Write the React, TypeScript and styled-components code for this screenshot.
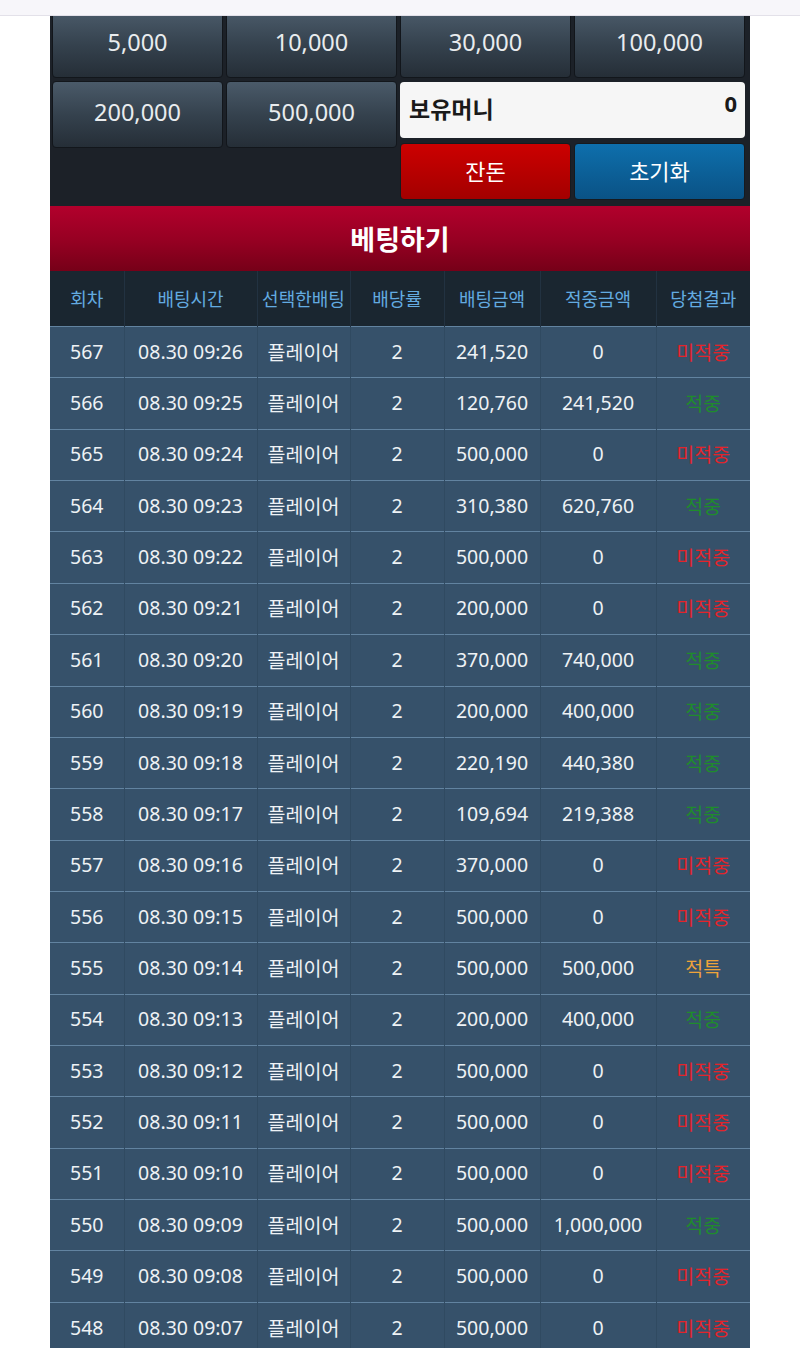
import styled, { createGlobalStyle, css } from "styled-components";

const GlobalStyle = createGlobalStyle`
  body {
    margin: 0;
    background: #ffffff;
    font-family: "Noto Sans", "Noto Sans CJK KR", sans-serif;
  }
`;

const TopBar = styled.div`
  position: fixed;
  top: 0;
  left: 0;
  right: 0;
  height: 15px;
  background: #f7f6fa;
  border-bottom: 1px solid #e3e1e9;
  z-index: 10;
`;

const Page = styled.div`
  width: 700px;
  margin: 0 auto;
  background: #1c2128;
`;

const Pad = styled.div`
  display: grid;
  grid-template-columns: repeat(4, 1fr);
  grid-template-rows: 67px auto;
  gap: 3px;
  padding: 11px 5px 6px 2px;
`;

const ChipButton = styled.button`
  height: 67px;
  border: 1px solid #12161b;
  border-radius: 4px;
  background: linear-gradient(to bottom, #4a5a69 0%, #35424e 50%, #252e37 100%);
  color: #e9ecee;
  font-family: "Noto Sans", "Noto Sans CJK KR", sans-serif;
  font-size: 23.5px;
  padding: 0 0 6px;
  align-self: start;
  cursor: pointer;
`;

const Side = styled.div`
  grid-column: 3 / span 2;
  display: flex;
  flex-direction: column;
  gap: 5px;
  padding-top: 1px;
`;

const Wallet = styled.div`
  height: 56px;
  border-radius: 4px;
  background: #f6f6f6;
  display: flex;
  align-items: center;
  justify-content: space-between;
  padding: 0 8px 4px 9px;
  box-sizing: border-box;
  color: #1a1a1a;
  font-weight: 700;
  font-size: 23px;
  font-family: "Noto Sans CJK KR", "Noto Sans", sans-serif;
`;

const WalletValue = styled.span`
  font-family: "Noto Sans", sans-serif;
  font-weight: 700;
  font-size: 22px;
  margin-bottom: 10px;
`;

const ActionRow = styled.div`
  display: grid;
  grid-template-columns: 1fr 1fr;
  gap: 3px;
`;

const ActionButton = styled.button<{ $tone: "red" | "blue" }>`
  height: 57px;
  border-radius: 4px;
  border: 1px solid #161a1f;
  color: #ffffff;
  font-size: 22px;
  font-family: "Noto Sans CJK KR", "Noto Sans", sans-serif;
  padding: 0 0 3px;
  ${({ $tone }) =>
    $tone === "red"
      ? css`
          background: linear-gradient(to bottom, #cc0000 0%, #a30000 100%);
        `
      : css`
          background: linear-gradient(to bottom, #0e6fac 0%, #0a5285 100%);
        `}
`;

const BetHeader = styled.div`
  height: 65px;
  display: flex;
  align-items: center;
  justify-content: center;
  background: linear-gradient(to bottom, #b2002c 0%, #950022 55%, #760018 100%);
  color: #ffffff;
  font-weight: 700;
  font-size: 27px;
  font-family: "Noto Sans CJK KR", "Noto Sans", sans-serif;
  box-sizing: border-box;
`;

const Table = styled.table`
  width: 700px;
  border-collapse: collapse;
  table-layout: fixed;
`;

const HeadCell = styled.th`
  height: 53px;
  padding: 0 0 2px;
  background: #1a2630;
  color: #63abe0;
  font-weight: 400;
  font-size: 18px;
  font-family: "Noto Sans CJK KR", "Noto Sans", sans-serif;
  border-left: 1px solid #223241;
  white-space: nowrap;
  &:first-child {
    border-left: none;
  }
`;

const Row = styled.tr`
  background: #36516a;
  border-top: 1px solid #6283a0;
`;

type Result = "miss" | "hit" | "special";

const resultColors: Record<Result, string> = {
  miss: "#e3242b",
  hit: "#1f8c2c",
  special: "#eea43a",
};

const Cell = styled.td<{ $result?: Result }>`
  height: 48.37px;
  padding: 0 0 2px;
  text-align: center;
  color: ${({ $result }) => ($result ? resultColors[$result] : "#eef2f5")};
  font-size: 19.5px;
  font-family: "Noto Sans", "Noto Sans CJK KR", sans-serif;
  border-left: 1px solid #304a61;
  white-space: nowrap;
  &:first-child {
    border-left: none;
  }
`;

const columns = [74, 133, 93, 94, 96, 116, 94];
const headers = ["회차", "배팅시간", "선택한배팅", "배당률", "배팅금액", "적중금액", "당첨결과"];

const rows: [number, string, string, string, Result][] = [
  [567, "09:26", "241,520", "0", "miss"],
  [566, "09:25", "120,760", "241,520", "hit"],
  [565, "09:24", "500,000", "0", "miss"],
  [564, "09:23", "310,380", "620,760", "hit"],
  [563, "09:22", "500,000", "0", "miss"],
  [562, "09:21", "200,000", "0", "miss"],
  [561, "09:20", "370,000", "740,000", "hit"],
  [560, "09:19", "200,000", "400,000", "hit"],
  [559, "09:18", "220,190", "440,380", "hit"],
  [558, "09:17", "109,694", "219,388", "hit"],
  [557, "09:16", "370,000", "0", "miss"],
  [556, "09:15", "500,000", "0", "miss"],
  [555, "09:14", "500,000", "500,000", "special"],
  [554, "09:13", "200,000", "400,000", "hit"],
  [553, "09:12", "500,000", "0", "miss"],
  [552, "09:11", "500,000", "0", "miss"],
  [551, "09:10", "500,000", "0", "miss"],
  [550, "09:09", "500,000", "1,000,000", "hit"],
  [549, "09:08", "500,000", "0", "miss"],
  [548, "09:07", "500,000", "0", "miss"],
];

const resultText: Record<Result, string> = {
  miss: "미적중",
  hit: "적중",
  special: "적특",
};

const chips = ["5,000", "10,000", "30,000", "100,000", "200,000", "500,000"];

export default function App() {
  return (
    <>
      <GlobalStyle />
      <TopBar />
      <Page>
        <Pad>
          {chips.map((c) => (
            <ChipButton key={c}>{c}</ChipButton>
          ))}
          <Side>
            <Wallet>
              <span>보유머니</span>
              <WalletValue>0</WalletValue>
            </Wallet>
            <ActionRow>
              <ActionButton $tone="red">잔돈</ActionButton>
              <ActionButton $tone="blue">초기화</ActionButton>
            </ActionRow>
          </Side>
        </Pad>
        <BetHeader>베팅하기</BetHeader>
        <Table>
          <colgroup>
            {columns.map((w, i) => (
              <col key={i} style={{ width: w }} />
            ))}
          </colgroup>
          <thead>
            <tr>
              {headers.map((h) => (
                <HeadCell key={h}>{h}</HeadCell>
              ))}
            </tr>
          </thead>
          <tbody>
            {rows.map(([no, time, bet, win, result]) => (
              <Row key={no}>
                <Cell>{no}</Cell>
                <Cell>08.30 {time}</Cell>
                <Cell>플레이어</Cell>
                <Cell>2</Cell>
                <Cell>{bet}</Cell>
                <Cell>{win}</Cell>
                <Cell $result={result}>{resultText[result]}</Cell>
              </Row>
            ))}
          </tbody>
        </Table>
      </Page>
    </>
  );
}
